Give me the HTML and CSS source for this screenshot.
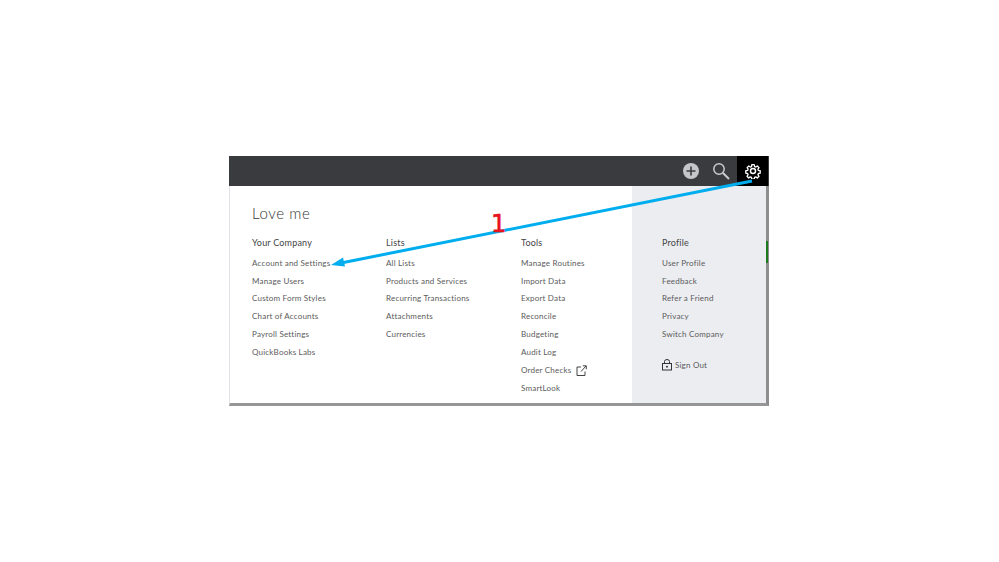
FILE: index.html
```html
<!DOCTYPE html>
<html lang="en">
<head>
  <meta charset="UTF-8">
  <title>Settings menu</title>
  <link rel="stylesheet" href="styles.css">
</head>
<body>
  <div class="window">
    <!-- top bar -->
    <div class="topbar">
      <svg class="plus-icon" width="16" height="16" viewBox="0 0 16 16">
        <circle cx="8" cy="8" r="8" fill="#c4c6c9"/>
        <path d="M8 3.5v9M3.5 8h9" stroke="#3a3b3e" stroke-width="1.6"/>
      </svg>
      <svg class="search-icon" width="18" height="18" viewBox="0 0 18 18" fill="none" stroke="#c9cbce">
        <circle cx="7" cy="7" r="5.2" stroke-width="1.5"/>
        <path d="M11 11l6 6" stroke-width="2"/>
      </svg>
      <div class="gear-tab">
        <svg class="gear-icon" width="16" height="16" viewBox="0 0 24 24" fill="none" stroke="#fff" stroke-width="2.200" stroke-linejoin="round">
          <circle cx="12" cy="12" r="3.800"/>
          <path d="M10 1.5h4l.6 3.1 2 .8 2.600-1.800 2.800 2.800-1.800 2.600.8 2 3 .6v4l-3 .6-.8 2 1.800 2.600-2.800 2.800-2.600-1.800-2 .8-.6 3h-4l-.6-3-2-.8-2.600 1.800-2.800-2.800 1.800-2.600-.8-2-3-.6v-4l3-.6.8-2L2.200 6.400 5 3.600l2.600 1.800 2-.8z" transform="translate(1.200 1.200) scale(.9)"/>
        </svg>
      </div>
    </div>

    <div class="menu">
      <div class="menu-main">
        <h1 class="company">Love me</h1>
        <div class="columns">
          <div class="col col-company">
            <h2>Your Company</h2>
            <a>Account and Settings</a>
            <a>Manage Users</a>
            <a>Custom Form Styles</a>
            <a>Chart of Accounts</a>
            <a>Payroll Settings</a>
            <a>QuickBooks Labs</a>
          </div>
          <div class="col col-lists">
            <h2>Lists</h2>
            <a>All Lists</a>
            <a>Products and Services</a>
            <a>Recurring Transactions</a>
            <a>Attachments</a>
            <a>Currencies</a>
          </div>
          <div class="col col-tools">
            <h2>Tools</h2>
            <a>Manage Routines</a>
            <a>Import Data</a>
            <a>Export Data</a>
            <a>Reconcile</a>
            <a>Budgeting</a>
            <a>Audit Log</a>
            <a class="with-icon">Order Checks
              <svg width="11" height="11" viewBox="0 0 11 11" fill="none" stroke="#444" stroke-width="1">
                <path d="M5 2H1v8.500h8V6.500M5 6.500L10 1M6.800 .8h3.500v3.500"/>
              </svg>
            </a>
            <a>SmartLook</a>
          </div>
        </div>
      </div>

      <div class="menu-side">
        <h2>Profile</h2>
        <a>User Profile</a>
        <a>Feedback</a>
        <a>Refer a Friend</a>
        <a>Privacy</a>
        <a>Switch Company</a>
        <a class="sign-out">
          <svg width="10" height="12" viewBox="0 0 10 12" fill="none" stroke="#333" stroke-width="1">
            <path d="M2.500 4V2.500a2.500 2 0 0 1 5 0V4"/>
            <rect x=".5" y="4.500" width="9" height="6.500"/>
            <circle cx="5" cy="7.700" r=".6" fill="#333"/>
          </svg>
          Sign Out
        </a>
      </div>
    </div>

    <!-- annotation drawn on top of the screenshot -->
    <svg class="arrow" width="540" height="250" viewBox="0 0 540 250">
      <path d="M523 25L112 107" stroke="#00aeef" stroke-width="3"/>
      <path d="M102 109L114 101.500 116 110.500z" fill="#00aeef"/>
    </svg>
    <span class="step-number">1</span>
  </div>
</body>
</html>
```

FILE: styles.css
```css
body {
  margin: 0;
  padding: 156px 0 0 229px;
  background: #fff;
  font-family: "Lato", sans-serif;
  color: #5b5b5b;
}

.window {
  position: relative;
  width: 540px;
  height: 250px;
  display: flex;
  flex-direction: column;
}

/* top bar */
.topbar {
  height: 30px;
  flex-shrink: 0;
  background: #3a3b3e;
  display: flex;
  justify-content: flex-end;
  align-items: center;
}

.plus-icon {
  margin-right: 13px;
}

.search-icon {
  margin-right: 7px;
}

.gear-tab {
  position: relative;
  width: 31px;
  height: 30px;
  margin-right: 1px;
  background: #000;
  display: flex;
  align-items: center;
  justify-content: center;
}

.gear-icon {
  margin-top: -1px;
}

.gear-tab::after {
  content: "";
  position: absolute;
  left: 0;
  top: 30px;
  border-style: solid;
  border-width: 4px 15.500px 0;
  border-color: #000 transparent transparent;
}

/* menu */
.menu {
  position: relative;
  flex: 1;
  min-height: 0;
  display: flex;
  border-left: 1px solid #dfe1e6;
  border-right: 3px solid #8e8e8e;
  border-bottom: 3px solid #969696;
}

/* green sliver of the page behind the menu */
.menu::after {
  content: "";
  position: absolute;
  right: -2px;
  top: 55px;
  width: 2px;
  height: 22px;
  background: #1f7a1f;
}

.menu-main {
  flex: 1;
  padding: 18px 0 0 22px;
}

.company {
  margin: 0 0 13px;
  font-size: 15px;
  font-weight: 300;
  line-height: 18px;
  letter-spacing: .6px;
  color: #333;
}

.columns {
  display: flex;
}

.col {
  display: flex;
  flex-direction: column;
}

.col-company {
  width: 134px;
}

.col-lists {
  width: 135px;
}

h2 {
  margin: 0 0 4px;
  font-size: 9px;
  font-weight: 400;
  line-height: 16px;
  letter-spacing: .2px;
  color: #444;
}

.col a,
.menu-side a {
  font-size: 8px;
  line-height: 17.700px;
  letter-spacing: .2px;
  color: #5b5b5b;
}

.with-icon {
  display: flex;
  align-items: center;
  gap: 5px;
  height: 19px;
}

.menu-side {
  width: 134px;
  padding: 49px 0 0 30px;
  box-sizing: border-box;
  background: #ebedf1;
  display: flex;
  flex-direction: column;
}

.menu-side .sign-out {
  display: flex;
  align-items: center;
  gap: 3px;
  margin-top: 13px;
}

/* annotation */
.arrow {
  position: absolute;
  left: 0;
  top: 0;
}

.step-number {
  position: absolute;
  left: 262px;
  top: 54px;
  font-family: "DejaVu Sans", sans-serif;
  font-size: 24px;
  line-height: 28px;
  -webkit-text-stroke: .6px #e8141c;
  color: #e8141c;
}
```
